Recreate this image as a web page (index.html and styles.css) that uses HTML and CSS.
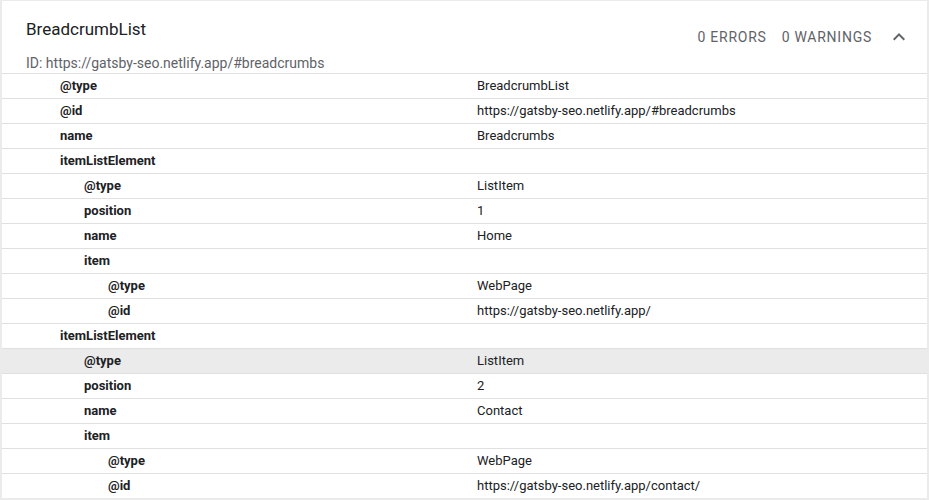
FILE: index.html
```html
<!DOCTYPE html>
<html>
<head>
<meta charset="utf-8">
<link rel="stylesheet" href="styles.css">
</head>
<body>
<div class="card">
  <div class="head">
    <div class="titles">
      <div class="title">BreadcrumbList</div>
      <div class="sub">ID: https://gatsby-seo.netlify.app/#breadcrumbs</div>
    </div>
    <div class="status">
      <span>0 ERRORS</span>
      <span>0 WARNINGS</span>
      <svg class="chev" width="24" height="24" viewBox="0 0 24 24"><path d="M7.41 15.41 12 10.83l4.59 4.58L18 14l-6-6-6 6z" fill="#5f6368"/></svg>
    </div>
  </div>
  <div class="rows">
    <div class="row"><div class="k l0">@type</div><div class="v">BreadcrumbList</div></div>
    <div class="row"><div class="k l0">@id</div><div class="v">https://gatsby-seo.netlify.app/#breadcrumbs</div></div>
    <div class="row"><div class="k l0">name</div><div class="v">Breadcrumbs</div></div>
    <div class="row"><div class="k l0">itemListElement</div><div class="v"></div></div>
    <div class="row"><div class="k l1">@type</div><div class="v">ListItem</div></div>
    <div class="row"><div class="k l1">position</div><div class="v">1</div></div>
    <div class="row"><div class="k l1">name</div><div class="v">Home</div></div>
    <div class="row"><div class="k l1">item</div><div class="v"></div></div>
    <div class="row"><div class="k l2">@type</div><div class="v">WebPage</div></div>
    <div class="row"><div class="k l2">@id</div><div class="v">https://gatsby-seo.netlify.app/</div></div>
    <div class="row"><div class="k l0">itemListElement</div><div class="v"></div></div>
    <div class="row hl"><div class="k l1">@type</div><div class="v">ListItem</div></div>
    <div class="row"><div class="k l1">position</div><div class="v">2</div></div>
    <div class="row"><div class="k l1">name</div><div class="v">Contact</div></div>
    <div class="row"><div class="k l1">item</div><div class="v"></div></div>
    <div class="row"><div class="k l2">@type</div><div class="v">WebPage</div></div>
    <div class="row"><div class="k l2">@id</div><div class="v">https://gatsby-seo.netlify.app/contact/</div></div>
  </div>
</div>
</body>
</html>
```

FILE: styles.css
```css
html, body {
  margin: 0;
  padding: 0;
}
body {
  background: #ebebeb;
  font-family: Roboto, "Liberation Sans", sans-serif;
  color: #202124;
  height: 500px;
  overflow: hidden;
}
.card {
  background: #fff;
  margin: 1px 2px 0 2px;
  height: 497px;
  overflow: hidden;
}
.head {
  height: 72px;
  display: flex;
  justify-content: space-between;
  align-items: flex-start;
  padding: 0 16px 0 24px;
}
.titles {
  padding-top: 18px;
}
.title {
  font-size: 17px;
  line-height: 20px;
  color: #202124;
}
.sub {
  margin-top: 16px;
  font-size: 14px;
  line-height: 16px;
  color: #5f6368;
}
.status {
  display: flex;
  align-items: center;
  padding-top: 24px;
  font-size: 14px;
  letter-spacing: 0.75px;
  color: #5f6368;
}
.status span {
  margin-right: 15px;
}
.status span:nth-child(2) {
  margin-right: 15px;
}
.chev {
  display: block;
}
.rows {
  border-top: 1px solid #e0e0e0;
}
.row {
  display: grid;
  grid-template-columns: 475px 1fr;
  height: 24px;
  align-items: center;
  border-bottom: 1px solid #e0e0e0;
  font-size: 13px;
}
.row > div {
  margin-top: -2px;
}
.row.hl {
  background: #ebebeb;
}
.k {
  font-weight: 700;
  color: #202124;
}
.l0 { padding-left: 58px; }
.l1 { padding-left: 82px; }
.l2 { padding-left: 106px; }
.v {
  color: #202124;
}
```
